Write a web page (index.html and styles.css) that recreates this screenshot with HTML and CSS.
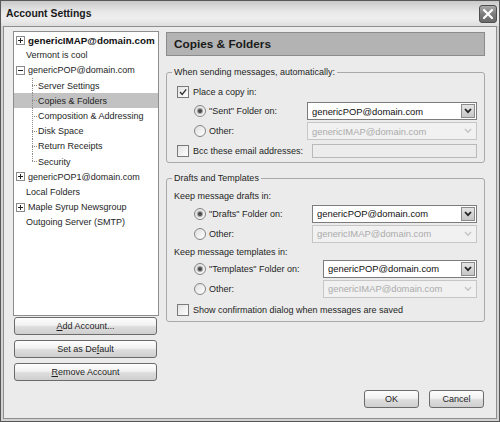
FILE: index.html
```html
<!DOCTYPE html>
<html>
<head>
<meta charset="utf-8">
<link rel="stylesheet" href="styles.css">
</head>
<body>
<div class="window">
  <div class="titlebar">
    <span class="title">Account Settings</span>
    <div class="close"><svg width="12" height="12" viewBox="0 0 12 12"><path d="M2 2 L10 10 M10 2 L2 10" stroke="#fff" stroke-width="2.2" stroke-linecap="round"/></svg></div>
  </div>
  <div class="frame">
    <div class="main">
      <div class="left">
        <div class="tree">
          <div class="node"><svg class="exp" width="9" height="9" viewBox="0 0 9 9"><rect x="0.5" y="0.5" width="8" height="8" fill="#fff" stroke="#8a8a8a"/><path d="M2 4.5 H7 M4.5 2 V7" stroke="#222"/></svg><b class="bold">genericIMAP@domain.com</b></div>
          <div class="node leaf">Vermont is cool</div>
          <div class="node"><svg class="exp" width="9" height="9" viewBox="0 0 9 9"><rect x="0.5" y="0.5" width="8" height="8" fill="#fff" stroke="#8a8a8a"/><path d="M2 4.5 H7" stroke="#222"/></svg>genericPOP@domain.com</div>
          <div class="child"><span class="branch"></span>Server Settings</div>
          <div class="child selected"><span class="branch"></span>Copies &amp; Folders</div>
          <div class="child"><span class="branch"></span>Composition &amp; Addressing</div>
          <div class="child"><span class="branch"></span>Disk Space</div>
          <div class="child"><span class="branch"></span>Return Receipts</div>
          <div class="child"><span class="branch last"></span>Security</div>
          <div class="node"><svg class="exp" width="9" height="9" viewBox="0 0 9 9"><rect x="0.5" y="0.5" width="8" height="8" fill="#fff" stroke="#8a8a8a"/><path d="M2 4.5 H7 M4.5 2 V7" stroke="#222"/></svg>genericPOP1@domain.com</div>
          <div class="node leaf">Local Folders</div>
          <div class="node"><svg class="exp" width="9" height="9" viewBox="0 0 9 9"><rect x="0.5" y="0.5" width="8" height="8" fill="#fff" stroke="#8a8a8a"/><path d="M2 4.5 H7 M4.5 2 V7" stroke="#222"/></svg>Maple Syrup Newsgroup</div>
          <div class="node leaf">Outgoing Server (SMTP)</div>
        </div>
        <div class="acct-buttons">
          <div class="btn"><span><u>A</u>dd Account...</span></div>
          <div class="btn"><span>Set as De<u>f</u>ault</span></div>
          <div class="btn"><span><u>R</u>emove Account</span></div>
        </div>
      </div>
      <div class="right">
        <div class="panel-header">Copies &amp; Folders</div>

        <fieldset class="group g1">
          <legend>When sending messages, automatically:</legend>
          <div class="row r19 check-row"><span class="cb"><svg width="10" height="10" viewBox="0 0 10 10"><path d="M2 5 L4.2 7.4 L8.2 2.4" fill="none" stroke="#333" stroke-width="1.4"/></svg></span><span class="lbl">Place a copy in:</span></div>
          <div class="row r20 radio-row"><span class="rb on"></span><span class="lbl grow">"Sent" Folder on:</span><div class="select w170"><span class="val">genericPOP@domain.com</span><span class="dd"><svg width="8" height="6" viewBox="0 0 8 6"><path d="M1 1 L4 4.2 L7 1" fill="none" stroke="#222" stroke-width="1.8"/></svg></span></div></div>
          <div class="row r20 radio-row"><span class="rb"></span><span class="lbl grow">Other:</span><div class="select w170 dis"><span class="val">genericIMAP@domain.com</span><span class="dd"><svg width="8" height="6" viewBox="0 0 8 6"><path d="M1 1 L4 4.2 L7 1" fill="none" stroke="#c4c4c4" stroke-width="1.4"/></svg></span></div></div>
          <div class="row r20 check-row"><span class="cb"></span><span class="lbl grow">Bcc these email addresses:</span><div class="field w165"></div></div>
        </fieldset>

        <fieldset class="group g2">
          <legend>Drafts and Templates</legend>
          <div class="row r16"><span class="lbl">Keep message drafts in:</span></div>
          <div class="row r19 radio-row"><span class="rb on"></span><span class="lbl grow">"Drafts" Folder on:</span><div class="select w165"><span class="val">genericPOP@domain.com</span><span class="dd"><svg width="8" height="6" viewBox="0 0 8 6"><path d="M1 1 L4 4.2 L7 1" fill="none" stroke="#222" stroke-width="1.8"/></svg></span></div></div>
          <div class="row r21 radio-row"><span class="rb"></span><span class="lbl grow">Other:</span><div class="select w165 dis"><span class="val">genericIMAP@domain.com</span><span class="dd"><svg width="8" height="6" viewBox="0 0 8 6"><path d="M1 1 L4 4.2 L7 1" fill="none" stroke="#c4c4c4" stroke-width="1.4"/></svg></span></div></div>
          <div class="row r15"><span class="lbl">Keep message templates in:</span></div>
          <div class="row r19 radio-row"><span class="rb on"></span><span class="lbl grow">"Templates" Folder on:</span><div class="select w154"><span class="val">genericPOP@domain.com</span><span class="dd"><svg width="8" height="6" viewBox="0 0 8 6"><path d="M1 1 L4 4.2 L7 1" fill="none" stroke="#222" stroke-width="1.8"/></svg></span></div></div>
          <div class="row r21 radio-row"><span class="rb"></span><span class="lbl grow">Other:</span><div class="select w154 dis"><span class="val">genericIMAP@domain.com</span><span class="dd"><svg width="8" height="6" viewBox="0 0 8 6"><path d="M1 1 L4 4.2 L7 1" fill="none" stroke="#c4c4c4" stroke-width="1.4"/></svg></span></div></div>
          <div class="row r21 check-row"><span class="cb"></span><span class="lbl">Show confirmation dialog when messages are saved</span></div>
        </fieldset>
      </div>
    </div>
    <div class="footer">
      <div class="btn dlg"><span>OK</span></div>
      <div class="btn dlg"><span>Cancel</span></div>
    </div>
  </div>
</div>
</body>
</html>
```

FILE: styles.css
```css
* { box-sizing: border-box; }
html, body { margin: 0; padding: 0; background: #ffffff; }
body {
  font-family: "Liberation Sans", Arial, sans-serif;
  font-size: 9px;
  color: #1e1e1e;
}
.window {
  width: 500px;
  height: 422px;
  border: 1px solid #585858;
  background: #d2d2d2;
  display: flex;
  flex-direction: column;
}
.titlebar {
  height: 25px;
  flex: none;
  display: flex;
  align-items: center;
  justify-content: space-between;
  padding: 0 2px 0 5px;
  background: linear-gradient(#c9c9c9, #e9e9e9 45%, #eeeeee 70%, #dedede);
}
.title {
  font-weight: bold;
  font-size: 10.4px;
  color: #1a1a1a;
}
.close {
  width: 18px;
  height: 18px;
  border: 1px solid #4e4e4e;
  border-radius: 3px;
  background: linear-gradient(#a9a9a9, #7a7a7a 55%, #6a6a6a);
  display: flex;
  align-items: center;
  justify-content: center;
}
.frame {
  flex: 1;
  margin: 0 2px 2px 2px;
  border: 1px solid #8e8e8e;
  background: #ebebeb;
  display: flex;
  flex-direction: column;
}
.main {
  flex: 1;
  display: flex;
  gap: 7px;
  padding: 4px 11px 0 9px;
}
.left {
  width: 146px;
  flex: none;
  display: flex;
  flex-direction: column;
}
.tree {
  height: 285px;
  background: #ffffff;
  border: 1px solid #8d8d8d;
  padding-top: 0.5px;
}
.node, .child {
  height: 15.2px;
  display: flex;
  align-items: center;
  white-space: nowrap;
}
.node { padding-left: 2px; }
.node.leaf { padding-left: 12px; }
.exp { flex: none; margin-right: 3px; }
.bold { font-weight: bold; font-size: 9.8px; color: #111; }
.child { padding-left: 18px; }
.child.selected { background: #c2c2c2; }
.branch {
  width: 5px;
  height: 100%;
  margin-right: 1px;
  flex: none;
  background:
    repeating-linear-gradient(to right, #8c8c8c 0 1px, transparent 1px 2px) left center / 100% 1px no-repeat,
    repeating-linear-gradient(to bottom, #8c8c8c 0 1px, transparent 1px 2px) left top / 1px 100% no-repeat;
}
.branch.last {
  background:
    repeating-linear-gradient(to right, #8c8c8c 0 1px, transparent 1px 2px) left center / 100% 1px no-repeat,
    repeating-linear-gradient(to bottom, #8c8c8c 0 1px, transparent 1px 2px) left top / 1px 50% no-repeat;
}
.acct-buttons {
  display: flex;
  flex-direction: column;
  gap: 5px;
  margin-top: 1px;
  padding: 0 2px 0 1px;
}
.btn {
  height: 18px;
  border: 1px solid #6b6b6b;
  border-radius: 3px;
  background: linear-gradient(#fefefe, #f1f1f1 45%, #dddddd 55%, #cfcfcf);
  display: flex;
  align-items: center;
  justify-content: center;
  color: #1e1e1e;
}
.btn u { text-decoration: underline; }
.right {
  width: 319px;
  flex: none;
  padding-top: 1px;
  display: flex;
  flex-direction: column;
}
.panel-header {
  height: 24px;
  background: #b3b3b3;
  border: 1px solid #8b8b8b;
  display: flex;
  align-items: center;
  padding-left: 7px;
  font-weight: bold;
  font-size: 11.8px;
  color: #1a1a1a;
}
.group {
  margin: 0;
  border: 1px solid #a9a9a9;
  border-radius: 3px;
  padding: 4px 7px 1px 7px;
  min-width: 0;
}
.g1 { margin-top: 10px; }
.g2 { margin-top: 9px; }
.group legend {
  padding: 0 2px;
  margin-left: -2px;
  line-height: 12px;
  height: 12px;
}
.row { display: flex; align-items: center; }
.r15 { height: 15px; }
.r16 { height: 16px; }
.r19 { height: 19px; }
.r20 { height: 20px; }
.r21 { height: 21px; }
.check-row { padding-left: 3px; }
.radio-row { padding-left: 20px; }
.lbl { white-space: nowrap; }
.grow { flex: 1; }
.cb {
  width: 12px;
  height: 12px;
  flex: none;
  border: 1px solid #7a7a7a;
  background: linear-gradient(135deg, #e2e2e2, #ffffff);
  margin-right: 4px;
  display: flex;
  align-items: center;
  justify-content: center;
}
.rb {
  width: 12px;
  height: 12px;
  flex: none;
  border: 1px solid #858585;
  border-radius: 50%;
  background: linear-gradient(135deg, #dedede, #ffffff);
  margin-right: 3px;
  display: flex;
  align-items: center;
  justify-content: center;
}
.rb.on::after {
  content: "";
  width: 4px;
  height: 4px;
  border-radius: 50%;
  background: #4a4a4a;
  box-shadow: 0 0 1px 1px #9a9a9a;
}
.select {
  height: 18px;
  flex: none;
  border: 1px solid #7c7c7c;
  background: #ffffff;
  display: flex;
  align-items: center;
  padding: 1px;
}
.select .val {
  flex: 1;
  padding-left: 3px;
  font-size: 9.4px;
  color: #111;
  white-space: nowrap;
}
.select .dd {
  width: 14px;
  height: 100%;
  border: 1px solid #8a8a8a;
  background: linear-gradient(#e4e4e4, #c6c6c6);
  display: flex;
  align-items: center;
  justify-content: center;
}
.select.dis {
  border-color: #c6c6c6;
  background: #f1f1f1;
}
.select.dis .val { color: #ababab; }
.select.dis .dd {
  border-color: transparent;
  background: transparent;
}
.w170 { width: 170px; }
.w165 { width: 165px; }
.w154 { width: 154px; }
.field {
  height: 14px;
  flex: none;
  border: 1px solid #b9b9b9;
  background: #ececec;
}
.footer {
  display: flex;
  justify-content: flex-end;
  gap: 10px;
  padding: 0 12px 10px 0;
}
.btn.dlg { width: 55px; }
```
